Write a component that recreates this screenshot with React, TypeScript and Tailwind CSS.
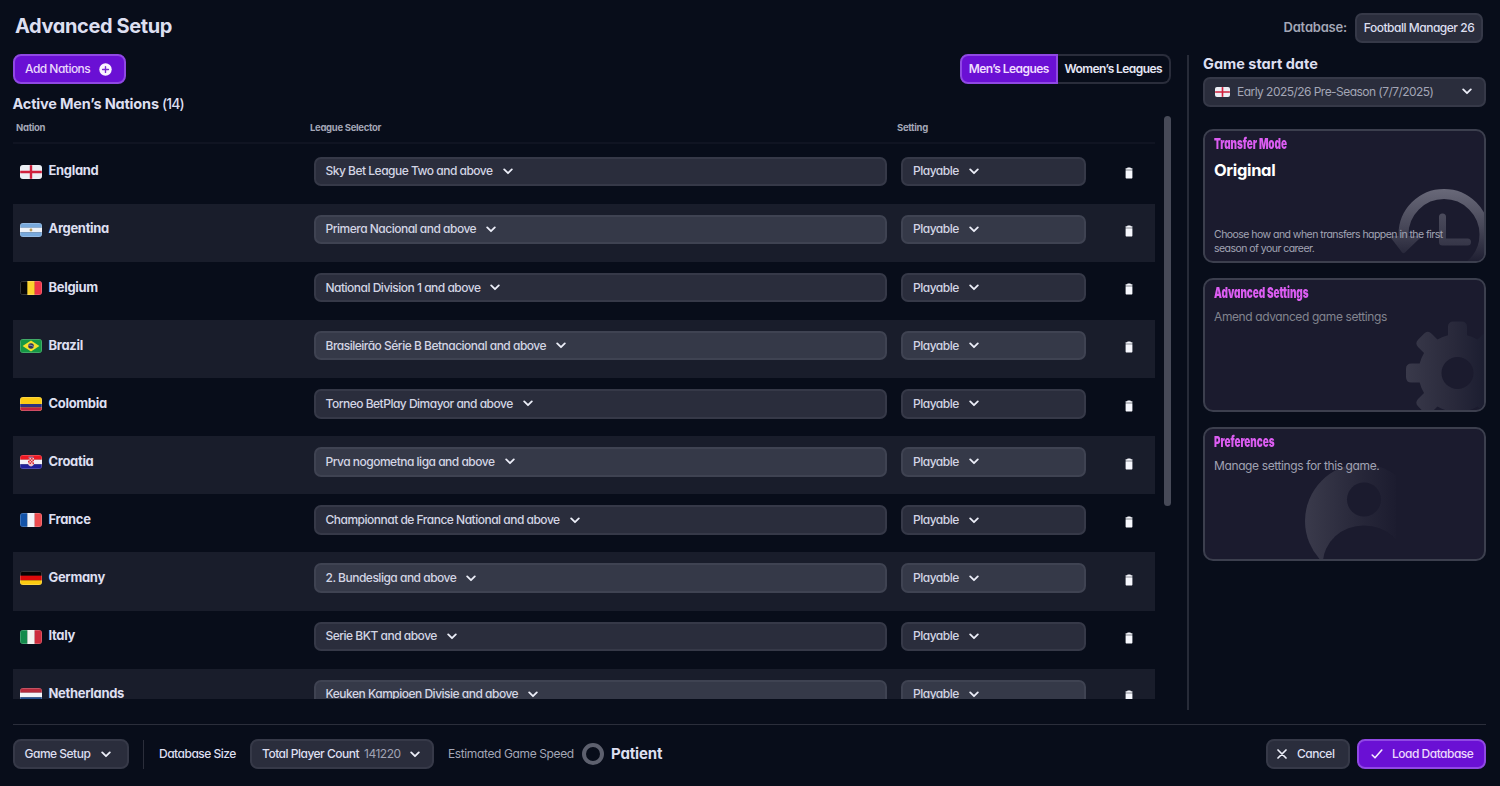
import React from "react";

type Flag =
  | "england" | "argentina" | "belgium" | "brazil" | "colombia"
  | "croatia" | "france" | "germany" | "italy" | "netherlands";

const nations: { name: string; flag: Flag; league: string }[] = [
  { name: "England", flag: "england", league: "Sky Bet League Two and above" },
  { name: "Argentina", flag: "argentina", league: "Primera Nacional and above" },
  { name: "Belgium", flag: "belgium", league: "National Division 1 and above" },
  { name: "Brazil", flag: "brazil", league: "Brasileirão Série B Betnacional and above" },
  { name: "Colombia", flag: "colombia", league: "Torneo BetPlay Dimayor and above" },
  { name: "Croatia", flag: "croatia", league: "Prva nogometna liga and above" },
  { name: "France", flag: "france", league: "Championnat de France National and above" },
  { name: "Germany", flag: "germany", league: "2. Bundesliga and above" },
  { name: "Italy", flag: "italy", league: "Serie BKT and above" },
  { name: "Netherlands", flag: "netherlands", league: "Keuken Kampioen Divisie and above" },
];

function Bars({ colors, vertical }: { colors: string[]; vertical?: boolean }) {
  return (
    <>
      {colors.map((c, i) =>
        vertical ? (
          <rect key={i} x={(i * 22) / 3} y="0" width="7.5" height="14" fill={c} />
        ) : (
          <rect key={i} x="0" y={(i * 14) / 3} width="22" height="4.8" fill={c} />
        ),
      )}
    </>
  );
}

function FlagArt({ flag }: { flag: Flag }) {
  switch (flag) {
    case "england":
      return (
        <>
          <rect width="22" height="14" fill="#eceef4" />
          <path d="M11 0v14M0 7h22" stroke="#d0203c" strokeWidth="2.4" />
        </>
      );
    case "argentina":
      return (
        <>
          <Bars colors={["#78a9dc", "#eef2f8", "#78a9dc"]} />
          <circle cx="11" cy="7" r="1.4" fill="#b99a58" />
        </>
      );
    case "belgium":
      return <Bars vertical colors={["#050507", "#fbd32c", "#ee3548"]} />;
    case "brazil":
      return (
        <>
          <rect width="22" height="14" fill="#159744" />
          <path d="M11 1.6 19.4 7 11 12.4 2.6 7z" fill="#f3e02c" />
          <circle cx="11" cy="7" r="2.8" fill="#2c3560" />
          <path d="M8.6 6.2c1.8-.3 3.6.2 4.9 1.5" stroke="#d8dde0" strokeWidth=".6" fill="none" />
        </>
      );
    case "colombia":
      return (
        <>
          <rect width="22" height="14" fill="#fccb14" />
          <rect y="7" width="22" height="3.5" fill="#2c3280" />
          <rect y="10.5" width="22" height="3.5" fill="#c3213f" />
        </>
      );
    case "croatia":
      return (
        <>
          <Bars colors={["#ee1822", "#f2f2f7", "#20209a"]} />
          <path d="M8 3h6v5.5c0 1.5-1.5 2.5-3 3-1.5-.5-3-1.5-3-3z" fill="#f1c3c6" />
          <path d="M8 3h1.5v1.5H8zM11 3h1.5v1.5H11zM9.5 4.5H11V6H9.5zM12.5 4.5H14V6h-1.5zM8 6h1.5v1.5H8zM11 6h1.5v1.5H11zM9.5 7.5H11V9H9.5zM12.5 7.5H14V9h-1.5z" fill="#dc2b35" />
          <path d="M8.5 2.2h5" stroke="#7f9fd6" strokeWidth="1" />
        </>
      );
    case "france":
      return <Bars vertical colors={["#1453a8", "#f1f2f8", "#ec4a4e"]} />;
    case "germany":
      return <Bars colors={["#060404", "#dd0a0a", "#fccb10"]} />;
    case "italy":
      return <Bars vertical colors={["#148a4c", "#f2f3ef", "#cd2b3c"]} />;
    case "netherlands":
      return <Bars colors={["#b52a3c", "#f3f4f8", "#23508f"]} />;
  }
}

function FlagIcon({ flag, className }: { flag: Flag; className: string }) {
  return (
    <span className={`block shrink-0 overflow-hidden ${className}`}>
      <svg viewBox="0 0 22 14" preserveAspectRatio="none" className="block h-full w-full">
        <FlagArt flag={flag} />
        <rect x=".4" y=".4" width="21.2" height="13.2" rx="1.8" fill="none" stroke="#fff" strokeOpacity=".28" strokeWidth=".8" />
      </svg>
    </span>
  );
}

function Chevron() {
  return (
    <svg viewBox="0 0 10 7" className="block h-[7px] w-2.5 shrink-0" fill="none" stroke="#eceef8" strokeWidth="1.8" strokeLinecap="round" strokeLinejoin="round">
      <path d="M1.2 1.4 5 5.2l3.8-3.8" />
    </svg>
  );
}

function Trash() {
  return (
    <svg viewBox="0 0 8 12" className="block h-3 w-2 shrink-0" fill="#f6f7fd">
      <path d="M2.6.4h2.8l.5.8h1.5v1.5H.6V1.2h1.5z" />
      <path d="M.6 3.2h6.8v7.300c0 .6-.4 1-1 1H1.600c-.6 0-1-.4-1-1z" />
    </svg>
  );
}

function Select({ label, striped, className }: { label: string; striped: boolean; className: string }) {
  return (
    <button
      className={`flex h-[29.5px] items-center gap-[10px] rounded-[7px] border-2 pl-[10px] text-[12px] font-medium tracking-[-0.5px] text-[#d3d5e4] ${
        striped ? "border-[#3f4352] bg-[#353948]" : "border-[#363948] bg-[#2a2d3c]"
      } ${className}`}
    >
      <span className="whitespace-nowrap">{label}</span>
      <Chevron />
    </button>
  );
}

function NationRow({ nation, striped }: { nation: (typeof nations)[number]; striped: boolean }) {
  return (
    <div className={`flex h-[58.125px] shrink-0 items-start pl-[7px] pt-[11px] ${striped ? "bg-[#191d2b]" : ""}`}>
      <div className="flex h-[29px] w-[294px] shrink-0 items-center gap-[7px]">
        <FlagIcon flag={nation.flag} className="mt-[1px] h-[14px] w-[22px] rounded-[3px]" />
        <span className="text-[13px] font-bold tracking-[-0.32px] text-[#dddff0]">{nation.name}</span>
      </div>
      <Select label={nation.league} striped={striped} className="w-[573px]" />
      <Select label="Playable" striped={striped} className="ml-[14.5px] w-[185px]" />
      <div className="ml-[39px] mt-[10.5px]">
        <Trash />
      </div>
    </div>
  );
}

function CardTitle({ children }: { children: string }) {
  return (
    <h3 className="origin-left whitespace-nowrap text-[15px] font-black leading-4 tracking-[-0.1px] text-[#dc5df2] [transform:scaleX(0.665)]">
      {children}
    </h3>
  );
}

function Card({ title, art, children }: { title: string; art: React.ReactNode; children: React.ReactNode }) {
  return (
    <section className="relative h-[134.5px] shrink-0 overflow-hidden rounded-[10px] border-2 border-[#3c3f4e] bg-[#1b1b2e] px-[9px] pt-[5px]">
      <svg viewBox="0 0 283 134.5" className="absolute -left-0.5 -top-0.5 h-[134.5px] w-[283px]" fill="none">
        {art}
      </svg>
      <div className="relative flex h-full flex-col">
        <CardTitle>{title}</CardTitle>
        {children}
      </div>
    </section>
  );
}

function ClockArt() {
  return (
    <>
      <defs>
        <linearGradient id="clock" x1="0" y1="60" x2="0" y2="134" gradientUnits="userSpaceOnUse">
          <stop offset="0" stopColor="#696979" />
          <stop offset=".5" stopColor="#484859" />
          <stop offset="1" stopColor="#1d1d30" />
        </linearGradient>
        <linearGradient id="hands" x1="0" y1="84" x2="0" y2="118" gradientUnits="userSpaceOnUse">
          <stop offset="0" stopColor="#4c4c5d" />
          <stop offset="1" stopColor="#353547" />
        </linearGradient>
      </defs>
      <path d="M200.5 108v-2.5a40.5 40.5 0 0 1 81 0 40.5 40.5 0 0 1-16 32" stroke="url(#clock)" strokeWidth="10" />
      <path d="M189 107h27.5a1 1 0 0 1 .8 1.7L202 123.500a2 2 0 0 1-2.900 0L188 109z" fill="url(#clock)" />
      <path d="M239.500 88v25h25" stroke="url(#hands)" strokeWidth="7" strokeLinecap="round" strokeLinejoin="round" />
    </>
  );
}

function GearArt() {
  return (
    <>
      <defs>
        <linearGradient id="gear" x1="202" y1="0" x2="283" y2="0" gradientUnits="userSpaceOnUse">
          <stop offset="0" stopColor="#3a3a4b" />
          <stop offset=".6" stopColor="#29293b" />
          <stop offset="1" stopColor="#1b1d30" />
        </linearGradient>
        <mask id="hub" maskUnits="userSpaceOnUse" x="190" y="30" width="130" height="130">
          <rect x="190" y="30" width="130" height="130" fill="#fff" />
          <circle cx="254.5" cy="95" r="16" fill="#000" />
        </mask>
        <path id="tooth" d="M245 66V49q0-5.500 5.500-5.500h8q5.500 0 5.500 5.500v17z" />
        <clipPath id="gearShape">
          <circle cx="254.5" cy="95" r="39" />
          {[0, 45, 90, 135, 180, 225, 270, 315].map((a) => (
            <use key={a} href="#tooth" transform={`rotate(${a} 254.5 95)`} />
          ))}
        </clipPath>
      </defs>
      <g mask="url(#hub)">
        <rect x="195" y="35" width="88" height="100" fill="url(#gear)" clipPath="url(#gearShape)" />
      </g>
    </>
  );
}

function ProfileArt() {
  return (
    <>
      <defs>
        <linearGradient id="profile" x1="103" y1="0" x2="193" y2="0" gradientUnits="userSpaceOnUse">
          <stop offset="0" stopColor="#3a3a4b" />
          <stop offset=".5" stopColor="#2a2a3c" />
          <stop offset="1" stopColor="#1c1c2f" />
        </linearGradient>
        <mask id="bust" maskUnits="userSpaceOnUse" x="95" y="30" width="110" height="105">
          <circle cx="159" cy="94" r="57" fill="#fff" />
          <circle cx="161" cy="72.5" r="17" fill="#000" />
          <ellipse cx="161" cy="136" rx="41" ry="37.5" fill="#000" />
        </mask>
      </defs>
      <rect x="100" y="35" width="93" height="97.5" fill="url(#profile)" mask="url(#bust)" />
    </>
  );
}

const outlineButton = "border-2 border-[#363948] bg-[#2a2d3c]";
const primaryButton = "border-2 border-[#9048e4] bg-[#6a10d4]";

export default function App() {
  return (
    <div className="flex h-[786px] w-[1500px] flex-col overflow-hidden bg-[#080d1a] font-['Inter',sans-serif] text-[#dddff0] [font-feature-settings:'cv11'_1]">
      <header className="flex h-[54px] shrink-0 items-start justify-between pl-[15px] pr-[17px]">
        <h1 className="mt-[11px] text-[20px] font-bold leading-[30px] tracking-[-0.38px]">Advanced Setup</h1>
        <div className="mt-[13px] flex items-center gap-[8px]">
          <span className="text-[13px] font-semibold tracking-[-0.2px] text-[#a3a6b6]">Database:</span>
          <button className={`flex h-[29.5px] w-[128px] items-center justify-center whitespace-nowrap rounded-[7px] pt-px text-[12px] font-medium tracking-[-0.48px] ${outlineButton}`}>
            Football Manager 26
          </button>
        </div>
      </header>

      <main className="flex h-[670px] shrink-0 pl-[12.5px]">
        <div className="flex w-[1158.5px] flex-col">
          <div className="flex h-[30px] shrink-0 justify-between">
            <button className={`flex w-[113.5px] items-center rounded-[8px] pl-[10.500px] text-[12px] font-medium tracking-[-0.52px] text-[#ead7fc] ${primaryButton}`}>
              <span className="whitespace-nowrap">Add Nations</span>
              <svg viewBox="0 0 13 13" className="ml-[9px] h-[13px] w-[13px] shrink-0">
                <circle cx="6.5" cy="6.5" r="6.2" fill="#fbf5ff" />
                <path d="M6.5 3.6v5.8M3.6 6.5h5.8" stroke="#7a2bd0" strokeWidth="1.4" strokeLinecap="round" />
              </svg>
            </button>
            <div className="flex text-[12px] font-semibold tracking-[-0.58px]">
              <button className={`flex w-[97.5px] items-center justify-center whitespace-nowrap rounded-l-[8px] text-[#f0dcff] ${primaryButton}`}>
                Men’s Leagues
              </button>
              <button className="flex w-[113.5px] items-center justify-center whitespace-nowrap rounded-r-[8px] border-2 border-l-0 border-[#2a2d3b] text-[#e6e7f5]">
                Women’s Leagues
              </button>
            </div>
          </div>

          <h2 className="mt-[9px] shrink-0 text-[14.5px] font-bold leading-[22px] tracking-[-0.19px]">
            Active Men’s Nations <span className="text-[14px] font-medium tracking-[-0.9px]">(14)</span>
          </h2>

          <div className="flex h-[584px] shrink-0 justify-between">
            <div className="flex w-[1142.5px] flex-col overflow-hidden">
              <div className="flex h-[28.5px] shrink-0 items-center border-b-2 border-[#101422] pl-[3.5px] text-[9.5px] font-bold tracking-[-0.3px] text-[#a3a6b6]">
                <span className="w-[294px]">Nation</span>
                <span className="w-[587px]">League Selector</span>
                <span>Setting</span>
              </div>
              <div className="flex min-h-0 flex-1 flex-col overflow-hidden pt-[2px]">
                {nations.map((nation, i) => (
                  <NationRow key={nation.name} nation={nation} striped={i % 2 === 1} />
                ))}
              </div>
            </div>
            <div className="mt-[1px] h-[390px] w-[7px] rounded-full bg-[#474a58]" />
          </div>
        </div>

        <div className="ml-[16px] mt-[1px] h-[655px] w-[1.5px] shrink-0 bg-[#272b38]" />

        <aside className="ml-[14.5px] flex w-[283px] flex-col">
          <h2 className="pt-[1px] text-[14.5px] font-bold leading-[18px]">Game start date</h2>
          <button className={`mt-[4px] flex h-[29.5px] shrink-0 items-center rounded-[7px] pl-[10px] pr-[12.5px] ${outlineButton}`}>
            <FlagIcon flag="england" className="h-[10px] w-[15px] rounded-[2px]" />
            <span className="ml-[7px] whitespace-nowrap text-[12px] tracking-[-0.54px] text-[#a3a6b6]">Early 2025/26 Pre-Season (7/7/2025)</span>
            <span className="ml-auto">
              <Chevron />
            </span>
          </button>
          <div className="mt-[22px] flex flex-col gap-[14.5px]">
            <Card title="Transfer Mode" art={<ClockArt />}>
              <p className="mt-[7px] text-[16.5px] font-bold leading-[22px] tracking-[-0.35px] text-white">Original</p>
              <p className="mt-[47.5px] whitespace-nowrap text-[10.5px] leading-[14px] tracking-[-0.54px] text-[#a2a4b4]">
                Choose how and when transfers happen in the first
                <br />
                season of your career.
              </p>
            </Card>
            <Card title="Advanced Settings" art={<GearArt />}>
              <p className="mt-[7px] whitespace-nowrap text-[12px] leading-[18px] tracking-[-0.4px] text-[#82848f]">Amend advanced game settings</p>
            </Card>
            <Card title="Preferences" art={<ProfileArt />}>
              <p className="mt-[7px] whitespace-nowrap text-[12px] leading-[18px] tracking-[-0.38px] text-[#a0a2b2]">Manage settings for this game.</p>
            </Card>
          </div>
        </aside>
      </main>

      <footer className="ml-[12.5px] mr-[14px] flex h-[62px] shrink-0 items-start border-t border-[#2b2e3b] pt-[14px] text-[12px] font-medium tracking-[-0.5px]">
        <div className="flex h-[30px] w-full items-center">
          <button className={`flex h-[30px] w-[116px] items-center rounded-[8px] pl-[10px] ${outlineButton}`}>
            <span className="w-[76px] whitespace-nowrap text-left">Game Setup</span>
            <Chevron />
          </button>
          <div className="ml-[14px] h-[29px] w-[1.5px] bg-[#2b2e3b]" />
          <span className="ml-[15px] w-[91px] whitespace-nowrap">Database Size</span>
          <button className={`flex h-[30px] w-[184px] items-center rounded-[8px] pl-[10px] ${outlineButton}`}>
            <span className="whitespace-nowrap">Total Player Count</span>
            <span className="ml-[5px] font-normal tracking-[-0.5px] text-[#a0a3b3]">141220</span>
            <span className="ml-[9px]">
              <Chevron />
            </span>
          </button>
          <span className="ml-[14px] w-[134px] whitespace-nowrap font-normal tracking-[-0.38px] text-[#a3a6b6]">Estimated Game Speed</span>
          <span className="h-[22px] w-[22px] rounded-full border-4 border-[#5d606e]" />
          <span className="ml-[7px] text-[15px] font-bold tracking-[-0.15px]">Patient</span>
          <button className={`ml-auto flex h-[30px] w-[84px] items-center rounded-[8px] pl-[9px] ${outlineButton}`}>
            <svg viewBox="0 0 10 10" className="h-[10px] w-[10px]" stroke="#eceef8" strokeWidth="1.7" strokeLinecap="round">
              <path d="M1 1l8 8M9 1L1 9" />
            </svg>
            <span className="ml-[10px]">Cancel</span>
          </button>
          <button className={`ml-[7px] flex h-[30px] w-[129px] items-center rounded-[8px] pl-[12px] text-[#ecd9fd] ${primaryButton}`}>
            <svg viewBox="0 0 12 10" className="h-[10px] w-3" fill="none" stroke="#f6ecff" strokeWidth="1.6" strokeLinecap="round" strokeLinejoin="round">
              <path d="M1.2 6l2.8 2.8L10.8 1" />
            </svg>
            <span className="ml-[9px] whitespace-nowrap">Load Database</span>
          </button>
        </div>
      </footer>
    </div>
  );
}
